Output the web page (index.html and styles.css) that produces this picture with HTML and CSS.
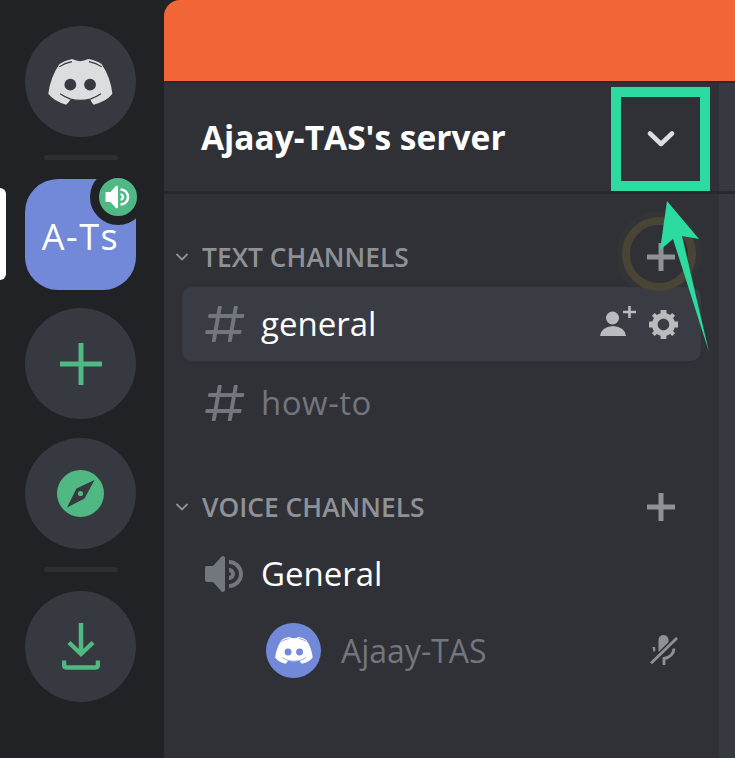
FILE: index.html
```html
<!DOCTYPE html>
<html lang="en">
<head>
<meta charset="utf-8">
<title>Ajaay-TAS's server</title>
<link rel="stylesheet" href="styles.css">
</head>
<body>
<svg class="defs" width="0" height="0" aria-hidden="true">
  <symbol id="clyde" viewBox="0 0 196 140">
    <path d="M72 0Q86 6 97 7Q108 6 122 0Q146 4 162 15Q190 56 195 106Q180 128 138 139Q130 131 128 123Q97 130 67 123Q64 131 54 139Q16 128 0 106Q6 56 34 15Q50 4 72 0Z" fill="currentColor"/>
    <path d="M33 24Q50 12 72 8M163 24Q146 12 124 8M36 106Q50 116 68 122Q97 130 128 122Q146 116 160 106" fill="none" stroke="var(--cut)" stroke-width="3.5"/>
    <circle cx="67" cy="78" r="18" fill="var(--cut)"/>
    <circle cx="127" cy="78" r="18" fill="var(--cut)"/>
  </symbol>
  <symbol id="hash" viewBox="0 0 24 24">
    <path fill="currentColor" fill-rule="evenodd" d="M5.88657 21C5.57547 21 5.3399 20.7189 5.39427 20.4126L6.00001 17H2.59511C2.28449 17 2.04905 16.7198 2.10259 16.4138L2.27759 15.4138C2.31946 15.1746 2.52722 15 2.77011 15H6.35001L7.41001 9H4.00511C3.69449 9 3.45905 8.71977 3.51259 8.41381L3.68759 7.41381C3.72946 7.17456 3.93722 7 4.18011 7H7.76001L8.39677 3.41262C8.43914 3.17391 8.64664 3 8.88907 3H9.87344C10.1845 3 10.4201 3.28107 10.3657 3.58738L9.76001 7H15.76L16.3968 3.41262C16.4391 3.17391 16.6466 3 16.8891 3H17.8734C18.1845 3 18.4201 3.28107 18.3657 3.58738L17.76 7H21.1649C21.4755 7 21.711 7.28023 21.6574 7.58619L21.4824 8.58619C21.4406 8.82544 21.2328 9 20.9899 9H17.41L16.35 15H19.7549C20.0655 15 20.301 15.2802 20.2474 15.5862L20.0724 16.5862C20.0306 16.8254 19.8228 17 19.5799 17H16L15.3632 20.5874C15.3209 20.8261 15.1134 21 14.8709 21H13.8866C13.5755 21 13.3399 20.7189 13.3943 20.4126L14 17H8.00001L7.36325 20.5874C7.32088 20.8261 7.11337 21 6.87094 21H5.88657ZM9.41045 9L8.35045 15H14.3504L15.4104 9H9.41045Z"/>
  </symbol>
  <symbol id="speaker" viewBox="0 0 24 24">
    <path fill="currentColor" d="M11.383 3.07904C11.009 2.92504 10.579 3.01004 10.293 3.29604L6 8.00204H3C2.45 8.00204 2 8.45304 2 9.00204V15.002C2 15.552 2.45 16.002 3 16.002H6L10.293 20.71C10.579 20.996 11.009 21.082 11.383 20.927C11.757 20.772 12 20.407 12 20.002V4.00204C12 3.59904 11.757 3.23204 11.383 3.07904ZM14 5.00195V7.00195C16.757 7.00195 19 9.24595 19 12.002C19 14.759 16.757 17.002 14 17.002V19.002C17.86 19.002 21 15.863 21 12.002C21 8.14295 17.86 5.00195 14 5.00195ZM14 9.00195C15.654 9.00195 17 10.349 17 12.002C17 13.657 15.654 15.002 14 15.002V13.002C14.551 13.002 15 12.553 15 12.002C15 11.451 14.551 11.002 14 11.002V9.00195Z"/>
  </symbol>
  <symbol id="chev" viewBox="0 0 14 10">
    <path d="M1.5 2L7 7.5L12.5 2" fill="none" stroke="currentColor" stroke-width="1.8"/>
  </symbol>
  <symbol id="plus" viewBox="0 0 28 28">
    <path d="M11.5 0h5v11.5H28v5H16.5V28h-5V16.5H0v-5h11.5z" fill="currentColor"/>
  </symbol>
</svg>

<div class="app">
  <nav class="rail">
    <div class="tile"><svg class="logo"><use href="#clyde"/></svg></div>
    <div class="rule"></div>
    <div class="server">
      <div class="tile tile-server">A-Ts</div>
      <span class="pill"></span>
      <span class="badge"><svg class="badge-icon"><use href="#speaker"/></svg></span>
    </div>
    <div class="tile">
      <svg class="rail-plus" viewBox="0 0 42 42"><path d="M18.500 0h5v18.500H42v5H23.500V42h-5V23.500H0v-5h18.500z"/></svg>
    </div>
    <div class="tile tile-gap">
      <svg class="compass" viewBox="0 0 47 47">
        <circle cx="23.500" cy="23.500" r="23.500" class="compass-disc"/>
        <path d="M37.500 10L27.500 28.500L10 37.500L19.500 18.500Z" class="compass-needle"/>
        <circle cx="23.500" cy="23.500" r="2.600" class="compass-disc"/>
      </svg>
    </div>
    <div class="rule"></div>
    <div class="tile">
      <svg class="download" viewBox="0 0 38 47">
        <path d="M19 0v31M7 19.500L19 31L31 19.500" class="dl-stroke"/>
        <path d="M2 37.500V41.500Q2 44.500 5 44.500H33Q36 44.500 36 41.500V37.500" class="dl-stroke"/>
      </svg>
    </div>
  </nav>

  <main class="panel">
    <div class="banner"></div>
    <div class="body">
      <header class="head">
        <h1 class="title">Ajaay-TAS's server</h1>
        <svg class="head-chev" viewBox="0 0 28 18"><path d="M3 3.500L14 14L25 3.500"/></svg>
      </header>
      <div class="list">
        <div class="cat">
          <svg class="cat-chev"><use href="#chev"/></svg>
          <span class="cat-name">TEXT CHANNELS</span>
          <svg class="cat-plus"><use href="#plus"/></svg>
        </div>
        <div class="row row-active">
          <svg class="row-icon"><use href="#hash"/></svg>
          <span class="row-name row-name-on">general</span>
          <span class="row-tools">
            <svg class="invite" viewBox="0 0 36 30">
              <circle cx="12.500" cy="12" r="6.500"/>
              <path d="M0 30Q1 21 13 20Q25 21 26 30Z"/>
              <path d="M28.200 0h2.600v4.700H36v2.600h-5.200V12h-2.600V7.300H23V4.700h5.200z"/>
            </svg>
            <svg class="gear" viewBox="2 2 20 20"><path fill-rule="evenodd" d="M19.738 10H22V14H19.739C19.498 14.931 19.1 15.798 18.565 16.564L20 18L18 20L16.565 18.564C15.797 19.099 14.932 19.498 14 19.738V22H10V19.738C9.069 19.498 8.203 19.099 7.436 18.564L6 20L4 18L5.436 16.564C4.901 15.799 4.502 14.932 4.262 14H2V10H4.262C4.502 9.068 4.9 8.202 5.436 7.436L4 6L6 4L7.436 5.436C8.202 4.9 9.068 4.502 10 4.262V2H14V4.261C14.932 4.502 15.797 4.9 16.565 5.435L18 3.999L20 5.999L18.564 7.436C19.099 8.202 19.498 9.069 19.738 10ZM12 16C14.2091 16 16 14.2091 16 12C16 9.79086 14.2091 8 12 8C9.79086 8 8 9.79086 8 12C8 14.2091 9.79086 16 12 16Z"/></svg>
          </span>
        </div>
        <div class="row">
          <svg class="row-icon"><use href="#hash"/></svg>
          <span class="row-name row-name-wide">how-to</span>
        </div>
        <div class="cat cat-voice">
          <svg class="cat-chev"><use href="#chev"/></svg>
          <span class="cat-name">VOICE CHANNELS</span>
          <svg class="cat-plus"><use href="#plus"/></svg>
        </div>
        <div class="row">
          <svg class="row-icon"><use href="#speaker"/></svg>
          <span class="row-name row-name-on">General</span>
        </div>
        <div class="member">
          <span class="avatar"><svg class="avatar-logo"><use href="#clyde"/></svg></span>
          <span class="member-name">Ajaay-TAS</span>
          <svg class="mic" viewBox="0 0 28 30">
            <path d="M8.500 5a5 5 0 0 1 10 0v2.300L8.500 17z"/>
            <path d="M2.500 12h2.600l.3 3.500-1.800 1.800z"/>
            <path d="M1 28.300L27 3" class="mic-line"/>
            <path d="M24 13.500c0 5-4 9-10 10v6.500" class="mic-line"/>
          </svg>
        </div>
      </div>
    </div>
  </main>

  <div class="ring"></div>
  <div class="callout"></div>
  <svg class="arrow" viewBox="0 0 60 160"><polygon points="17,0 49,38 32,35 59,151 23,38 10,49"/></svg>
</div>
</body>
</html>
```
FILE: styles.css
```css
* { box-sizing: border-box; }
html, body { margin: 0; height: 100%; overflow: hidden; background: #202225; }
.defs { position: absolute; }
.app { position: relative; display: flex; width: 735px; height: 758px; overflow: hidden; font-family: "Open Sans", "Noto Sans", sans-serif; }

.rail { flex: 0 0 164px; background: #202225; display: flex; flex-direction: column; align-items: center; padding: 26px 3px 0 0; gap: 18px; }
.tile { width: 111px; height: 111px; border-radius: 50%; background: #36393f; display: flex; align-items: center; justify-content: center; flex: none; }
.tile-gap { margin-top: 1px; }
.rule { width: 74px; height: 5px; border-radius: 3px; background: #2d2f33; flex: none; margin-bottom: 1px; }
.logo { --cut: #36393f; width: 65px; height: 46px; color: #dcddde; }
.server { position: relative; width: 111px; height: 111px; flex: none; }
.tile-server { border-radius: 33px; background: #7289da; color: #fff; font-size: 36px; letter-spacing: 1.5px; padding-top: 3px; }
.pill { position: absolute; left: -25px; top: 9px; width: 6px; height: 92px; border-radius: 0 6px 6px 0; background: #fff; }
.badge { position: absolute; left: 65px; top: -10px; width: 56px; height: 56px; border-radius: 50%; background: #4fb885; border: 9px solid #202225; display: flex; align-items: center; justify-content: center; color: #fff; }
.badge-icon { width: 30px; height: 30px; flex: none; }
.rail-plus { width: 42px; height: 42px; fill: #4fb883; }
.compass { width: 47px; height: 47px; }
.compass-disc { fill: #4fb883; }
.compass-needle { fill: #36393f; }
.download { width: 38px; height: 47px; }
.dl-stroke { fill: none; stroke: #4fb883; stroke-width: 4.500; }

.panel { flex: 1; display: flex; flex-direction: column; min-width: 0; }
.banner { height: 81px; flex: none; background: #f26537; border-top-left-radius: 16px; }
.body { flex: 1; display: flex; flex-direction: column; border-top: 2px solid #292b2f; background: linear-gradient(to right, #2f3136 555px, #36393f 555px); }
.head { height: 111px; flex: none; display: flex; align-items: center; padding: 0 60px 0 37px; justify-content: space-between; border-bottom: 3px solid #26282c; }
.title { margin: 0; font-size: 33.500px; font-weight: 700; color: #fff; white-space: nowrap; }
.head-chev { width: 28px; height: 18px; fill: none; stroke: #dcddde; stroke-width: 4.500; stroke-linecap: round; stroke-linejoin: round; margin: 4px 0 0; }

.list { padding-top: 38px; }
.cat { height: 50px; display: flex; align-items: center; padding-left: 11px; margin-right: 16px; color: #8e9297; }
.cat-voice { margin-top: 42px; }
.cat-chev { width: 14px; height: 10px; color: #8e9297; margin-right: 13px; flex: none; }
.cat-name { font-size: 26.400px; font-weight: 600; color: #8e9297; white-space: nowrap; padding-bottom: 1px; }
.cat-plus { width: 28px; height: 28px; margin-left: auto; margin-right: 44px; color: #8e9297; flex: none; }
.row { height: 74px; margin: 5px 34px 0 18px; padding-left: 19px; display: flex; align-items: center; border-radius: 10px; position: relative; }
.row-active { background: #393c43; }
.row-icon { width: 48px; height: 48px; color: #72767d; flex: none; }
.row-name { margin-left: 12px; font-size: 33px; color: #72767d; white-space: nowrap; padding-bottom: 2px; }
.row-name-on { color: #fff; }
.row-name-wide { letter-spacing: .5px; }
.row-tools { margin-left: auto; display: flex; align-items: center; gap: 13px; padding-right: 23px; }
.invite { width: 36px; height: 30px; fill: #b9bbbe; flex: none; margin-top: -6px; }
.gear { width: 29px; height: 29px; fill: #b9bbbe; flex: none; }

.member { height: 72px; margin: 3px 16px 0 102px; display: flex; align-items: center; }
.avatar { width: 55px; height: 55px; border-radius: 50%; background: #7289da; display: flex; align-items: center; justify-content: center; flex: none; }
.avatar-logo { --cut: #7289da; width: 38px; height: 27px; color: #fff; }
.member-name { margin-left: 20px; font-size: 32px; color: #72767d; white-space: nowrap; }
.mic { width: 28px; height: 30px; margin-left: auto; margin-right: 41px; fill: #8e9297; flex: none; }
.mic-line { fill: none; stroke: #8e9297; stroke-width: 2.800; }

.ring { position: absolute; left: 622px; top: 217px; width: 74px; height: 74px; border-radius: 50%; border: 8px solid #4a4437; box-shadow: 0 0 0 6px rgba(70, 66, 56, .22); }
.callout { position: absolute; left: 611px; top: 87px; width: 99px; height: 104px; border: 10px solid #2bdba0; }
.arrow { position: absolute; left: 650px; top: 201px; width: 60px; height: 160px; fill: #2bdba0; }
```
